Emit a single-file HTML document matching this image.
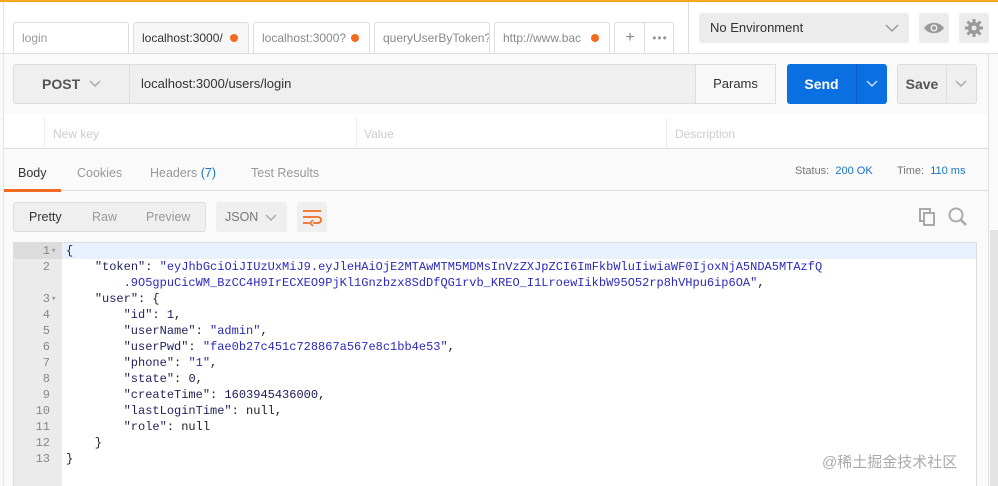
<!DOCTYPE html>
<html><head><meta charset="utf-8"><style>
*{box-sizing:border-box;margin:0;padding:0}
body{width:998px;height:486px;overflow:hidden;background:#fafafa;font-family:"Liberation Sans",sans-serif;position:relative;color:#505050}
.a{position:absolute}
.tab{position:absolute;top:22px;height:31px;border:1px solid #ddd;border-bottom:none;background:#fff;font-size:12px;line-height:30px;padding-left:8px;color:#888;border-radius:3px 3px 0 0;overflow:hidden;white-space:nowrap}
.dot{position:absolute;right:10px;top:11px;width:8px;height:8px;border-radius:50%;background:#f26b21}
.mono{font-family:"Liberation Mono",monospace;font-size:12px;line-height:16px;white-space:pre}
.k{color:#24245e}.s{color:#2a2ac0}.n{color:#1a1a5a}
</style></head><body>
<div class="a" style="left:0;top:0;width:998px;height:2px;background:#f5a623"></div>
<div class="a" style="left:0;top:2px;width:998px;height:52px;background:#fff"></div>
<div class="a" style="left:0;top:53px;width:998px;height:1px;background:#ddd"></div>
<div class="a" style="left:3px;top:2px;width:1px;height:484px;background:#e4e4e4"></div>
<div class="tab" style="left:13px;width:116px;color:#999">login</div>
<div class="tab" style="left:133px;width:116px;background:#f6f6f6;color:#333">localhost:3000/<div class="dot"></div></div>
<div class="tab" style="left:253px;width:117px">localhost:3000?<div class="dot"></div></div>
<div class="tab" style="left:374px;width:116px">queryUserByToken?t</div>
<div class="tab" style="left:494px;width:116px">http://www.bac<div class="dot"></div></div>
<div class="tab" style="left:614px;width:60px;padding:0"><span class="a" style="left:0;width:30px;text-align:center;font-size:16px;color:#888">+</span><span class="a" style="left:29px;top:0;width:1px;height:31px;background:#ddd"></span><span class="a" style="left:30px;width:30px;text-align:center;color:#999;letter-spacing:1px">•••</span></div>
<div class="a" style="left:688px;top:2px;width:1px;height:52px;background:#ddd"></div>
<div class="a" style="left:699px;top:13px;width:210px;height:30px;background:#ececec;border-radius:3px;font-size:13px;line-height:30px;padding-left:11px;color:#333">No Environment<svg class="a" style="right:10px;top:11px" width="14" height="9"><path d="M1 1l6 6 6-6" stroke="#999" fill="none" stroke-width="1.5"/></svg></div>
<div class="a" style="left:919px;top:13px;width:30px;height:30px;background:#ececec;border-radius:3px"><svg width="30" height="30"><path d="M5 15c5-7 15-7 20 0c-5 7-15 7-20 0z" fill="#999"/><circle cx="15" cy="15" r="3.5" fill="#ececec"/><circle cx="15" cy="15" r="2" fill="#999"/></svg></div>
<div class="a" style="left:959px;top:13px;width:30px;height:30px;background:#ececec;border-radius:3px"><svg width="30" height="30"><g stroke="#999" stroke-width="3"><line x1="15" y1="6" x2="15" y2="24"/><line x1="6" y1="15" x2="24" y2="15"/><line x1="8.5" y1="8.5" x2="21.5" y2="21.5"/><line x1="21.5" y1="8.5" x2="8.5" y2="21.5"/></g><circle cx="15" cy="15" r="6" fill="#999"/><circle cx="15" cy="15" r="2.5" fill="#ececec"/></svg></div>
<div class="a" style="left:13px;top:64px;width:763px;height:40px;background:#efefef;border:1px solid #ddd;border-radius:3px"></div>
<div class="a" style="left:42px;top:64px;font-size:14px;font-weight:bold;line-height:40px;color:#555">POST</div>
<svg class="a" style="left:89px;top:80px" width="12" height="8"><path d="M1 1l5 5 5-5" stroke="#aaa" fill="none" stroke-width="1.5"/></svg>
<div class="a" style="left:129px;top:64px;width:1px;height:40px;background:#ddd"></div>
<div class="a" style="left:141px;top:64px;font-size:13px;line-height:40px;color:#333">localhost:3000/users/login</div>
<div class="a" style="left:695px;top:64px;width:81px;height:40px;background:#f8f8f8;border:1px solid #ddd;font-size:13px;line-height:38px;text-align:center;color:#333">Params</div>
<div class="a" style="left:787px;top:64px;width:100px;height:40px;background:#0a6fe0;border-radius:3px"></div>
<div class="a" style="left:787px;top:64px;width:69px;font-size:14px;font-weight:bold;line-height:40px;text-align:center;color:#fff">Send</div>
<div class="a" style="left:856px;top:64px;width:1px;height:40px;background:#075fc4"></div>
<svg class="a" style="left:866px;top:80px" width="12" height="8"><path d="M1 1l5 5 5-5" stroke="#cde" fill="none" stroke-width="1.5"/></svg>
<div class="a" style="left:897px;top:64px;width:80px;height:40px;background:#efefef;border:1px solid #ddd;border-radius:3px"></div>
<div class="a" style="left:897px;top:64px;width:50px;font-size:14px;font-weight:bold;line-height:40px;text-align:center;color:#555">Save</div>
<div class="a" style="left:946px;top:64px;width:1px;height:40px;background:#ddd"></div>
<svg class="a" style="left:955px;top:80px" width="12" height="8"><path d="M1 1l5 5 5-5" stroke="#aaa" fill="none" stroke-width="1.5"/></svg>
<div class="a" style="left:4px;top:114px;width:984px;height:35px;background:#fff;border-bottom:1px solid #ddd"></div>
<div class="a" style="left:44px;top:118px;width:1px;height:30px;background:#eee"></div>
<div class="a" style="left:356px;top:118px;width:1px;height:30px;background:#eee"></div>
<div class="a" style="left:666px;top:118px;width:1px;height:30px;background:#eee"></div>
<div class="a" style="left:53px;top:127px;font-size:12px;color:#ccc">New key</div>
<div class="a" style="left:364px;top:127px;font-size:12px;color:#ccc">Value</div>
<div class="a" style="left:675px;top:127px;font-size:12px;color:#ccc">Description</div>
<div class="a" style="left:988px;top:54px;width:1px;height:432px;background:#e0e0e0"></div>
<div class="a" style="left:4px;top:190px;width:984px;height:1px;background:#ddd"></div>
<div class="a" style="left:18px;top:166px;font-size:12.5px;color:#333">Body</div>
<div class="a" style="left:4px;top:189px;width:57px;height:3px;background:#f26b21"></div>
<div class="a" style="left:77px;top:166px;font-size:12.5px;color:#999">Cookies</div>
<div class="a" style="left:150px;top:166px;font-size:12.5px;color:#999">Headers <span style="color:#1a73c8">(7)</span></div>
<div class="a" style="left:251px;top:166px;font-size:12.5px;color:#999">Test Results</div>
<div class="a" style="left:795px;top:165px;font-size:11px;color:#777">Status: <span style="color:#1a73c8">&nbsp;200 OK</span></div>
<div class="a" style="left:897px;top:165px;font-size:11px;color:#777">Time: <span style="color:#1a73c8">&nbsp;110 ms</span></div>
<div class="a" style="left:13px;top:202px;width:193px;height:30px;background:#efefef;border:1px solid #ddd;border-radius:3px"></div>
<div class="a" style="left:29px;top:210px;font-size:12.5px;color:#333">Pretty</div>
<div class="a" style="left:92px;top:210px;font-size:12.5px;color:#999">Raw</div>
<div class="a" style="left:146px;top:210px;font-size:12.5px;color:#999">Preview</div>
<div class="a" style="left:216px;top:202px;width:71px;height:30px;background:#efefef;border-radius:3px;font-size:12.5px;line-height:30px;padding-left:9px;color:#777">JSON<svg class="a" style="left:49px;top:12px" width="12" height="8"><path d="M1 1l5 5 5-5" stroke="#aaa" fill="none" stroke-width="1.5"/></svg></div>
<div class="a" style="left:297px;top:202px;width:30px;height:30px;background:#efefef;border-radius:3px"><svg width="30" height="30"><path d="M6 9h18M6 15h15a3 3 0 0 1 0 6h-5M6 21h6" stroke="#f26b21" stroke-width="1.8" fill="none"/><path d="M16 18l-3 3 3 3" stroke="#f26b21" stroke-width="1.5" fill="none"/></svg></div>
<svg class="a" style="left:918px;top:207px" width="20" height="20"><rect x="2" y="2" width="10" height="12" fill="none" stroke="#aaa" stroke-width="2"/><rect x="6" y="6" width="10" height="12" fill="#fafafa" stroke="#aaa" stroke-width="2"/></svg>
<svg class="a" style="left:947px;top:206px" width="22" height="22"><circle cx="9" cy="9" r="6.5" fill="none" stroke="#aaa" stroke-width="2"/><path d="M14 14l5 5" stroke="#aaa" stroke-width="2.5"/></svg>
<div class="a" style="left:13px;top:242px;width:964px;height:244px;background:#fff;border:1px solid #ddd;border-bottom:none"></div>
<div class="a" style="left:14px;top:243px;width:48px;height:243px;background:#ebebeb"></div>
<div class="a" style="left:62px;top:243px;width:914px;height:16px;background:#e8f2fe"></div>
<div class="a" style="left:14px;top:243px;width:48px;height:16px;background:#dcdcdc"></div>
<div class="a" style="left:990px;top:230px;width:8px;height:256px;background:#e3e3e3"></div>
<div class="a mono" style="left:14px;top:243px;width:36px;text-align:right;color:#888">1
2

3
4
5
6
7
8
9
10
11
12
13</div>
<div class="a mono" style="left:51px;top:243px;color:#999;font-size:9px">▾


▾</div>
<div class="a mono" style="left:66px;top:243px;color:#222">{
    <span class="k">"token"</span>: <span class="s">"eyJhbGciOiJIUzUxMiJ9.eyJleHAiOjE2MTAwMTM5MDMsInVzZXJpZCI6ImFkbWluIiwiaWF0IjoxNjA5NDA5MTAzfQ</span>
<span class="s">        .9O5gpuCicWM_BzCC4H9IrECXEO9PjKl1Gnzbzx8SdDfQG1rvb_KREO_I1LroewIikbW95O52rp8hVHpu6ip6OA"</span>,
    <span class="k">"user"</span>: {
        <span class="k">"id"</span>: <span class="n">1</span>,
        <span class="k">"userName"</span>: <span class="s">"admin"</span>,
        <span class="k">"userPwd"</span>: <span class="s">"fae0b27c451c728867a567e8c1bb4e53"</span>,
        <span class="k">"phone"</span>: <span class="s">"1"</span>,
        <span class="k">"state"</span>: <span class="n">0</span>,
        <span class="k">"createTime"</span>: <span class="n">1603945436000</span>,
        <span class="k">"lastLoginTime"</span>: null,
        <span class="k">"role"</span>: null
    }
}</div>
<div class="a" style="left:822px;top:451px;font-size:15px;color:#aaa;font-family:'Liberation Sans','Noto Sans CJK SC',sans-serif">@稀土掘金技术社区</div>
</body></html>
